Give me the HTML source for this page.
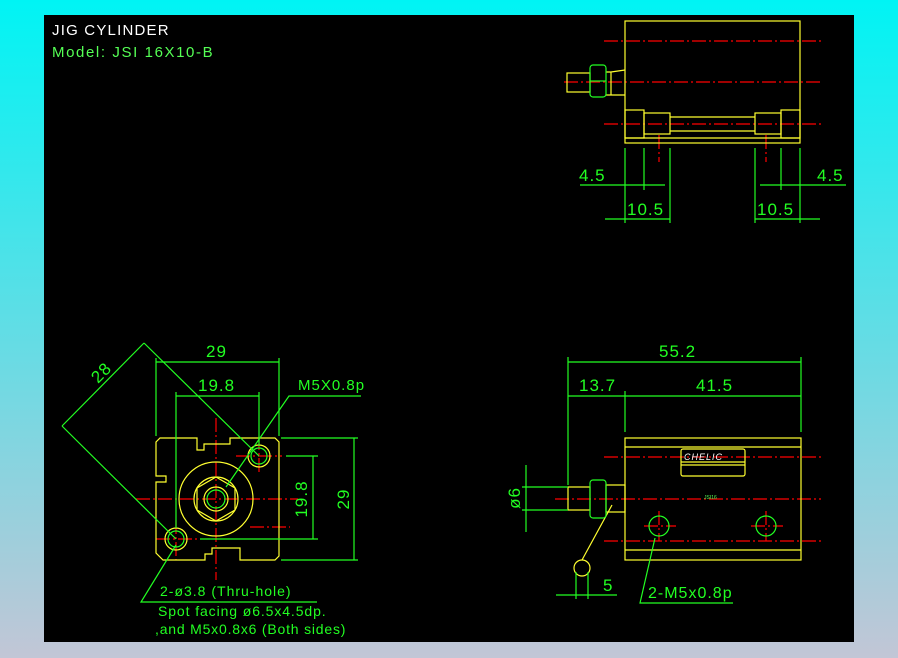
<!DOCTYPE html>
<html><head><meta charset="utf-8"><style>
html,body{margin:0;padding:0;width:898px;height:658px;overflow:hidden;background:linear-gradient(#00f4f4,#c2c6d6);}
svg{position:absolute;left:0;top:0}
text{font-family:"Liberation Sans",sans-serif;}
</style></head><body>
<svg width="898" height="658" viewBox="0 0 898 658">
<rect x="44" y="15" width="810" height="627" fill="#000"/>
<text x="52" y="35" fill="#fff" font-size="15" letter-spacing="1.2">JIG CYLINDER</text>
<text x="52" y="57" fill="#5f5" font-size="15" letter-spacing="1.6">Model:  JSI 16X10-B</text>

<g fill="none" stroke-width="1.2">
<g stroke="#f00" stroke-dasharray="14,3,2,3">
<line x1="604" y1="41" x2="821" y2="41"/><line x1="564" y1="82" x2="821" y2="82"/><line x1="604" y1="124" x2="821" y2="124"/>
<line x1="659" y1="135" x2="659" y2="162"/><line x1="766" y1="135" x2="766" y2="162"/>
<line x1="604" y1="457" x2="821" y2="457"/><line x1="555" y1="499" x2="821" y2="499"/><line x1="604" y1="541" x2="821" y2="541"/>
<line x1="136" y1="499" x2="298" y2="499"/><line x1="216" y1="418" x2="216" y2="580"/>
<line x1="236" y1="456" x2="282" y2="456"/><line x1="259" y1="436" x2="259" y2="472"/>
<line x1="156" y1="539" x2="198" y2="539"/><line x1="176" y1="520" x2="176" y2="560"/>
<line x1="644" y1="526" x2="676" y2="526"/><line x1="659" y1="511" x2="659" y2="541"/>
<line x1="751" y1="526" x2="783" y2="526"/><line x1="766" y1="511" x2="766" y2="541"/>
<line x1="250" y1="527" x2="290" y2="527"/>
</g>
<g stroke="#ffff30">
<rect x="625" y="21" width="175" height="122"/><line x1="625" y1="138" x2="800" y2="138"/>
<rect x="625" y="110" width="19" height="28"/><rect x="644" y="113" width="26" height="21"/>
<line x1="670" y1="117" x2="755" y2="117"/><line x1="670" y1="131" x2="755" y2="131"/>
<rect x="755" y="113" width="26" height="21"/><rect x="781" y="110" width="19" height="28"/>
<path d="M625 70 L611 72 L606 72 M625 95 L611 95 L606 95 M611 72 L611 95"/>
<rect x="567" y="73" width="23" height="19"/>
<path d="M160 438 L197 438 L197 450 L204 450 L204 444 L230 444 L230 438 L275 438 L279 442 L279 556 L275 560 L240 560 L240 548 L212 548 L212 554 L205 554 L205 560 L163 560 L156 553 L156 482 L166 482 L166 476 L156 476 L156 442 Z"/>
<circle cx="216" cy="499" r="37"/><circle cx="216" cy="499" r="22"/>
<polygon points="216,477 235,488 235,510 216,521 197,510 197,488"/>
<circle cx="216" cy="499" r="12"/>
<circle cx="259" cy="456" r="11"/><circle cx="176" cy="539" r="11"/>
<rect x="625" y="438" width="176" height="122"/><line x1="625" y1="447" x2="801" y2="447"/><line x1="625" y1="550" x2="801" y2="550"/>
<rect x="681" y="449" width="64" height="27" rx="2"/><line x1="681" y1="462" x2="745" y2="462"/><line x1="681" y1="465" x2="745" y2="465"/>
<rect x="568" y="487" width="22" height="23"/><rect x="606" y="485" width="19" height="27"/>
<path d="M612 505 L582 560"/><circle cx="582" cy="568" r="8"/>
</g>
<g stroke="#2f2">
<rect x="590" y="65" width="16" height="32" rx="3"/><line x1="590" y1="81" x2="606" y2="81"/>
<circle cx="259" cy="456" r="8"/><circle cx="176" cy="539" r="8"/><circle cx="216" cy="499" r="9"/>
<circle cx="659" cy="526" r="10"/><circle cx="766" cy="526" r="10"/>
<rect x="590" y="480" width="16" height="38" rx="3"/>
<line x1="625" y1="148" x2="625" y2="223"/><line x1="644" y1="148" x2="644" y2="190"/><line x1="670" y1="148" x2="670" y2="223"/>
<line x1="755" y1="148" x2="755" y2="223"/><line x1="781" y1="148" x2="781" y2="190"/><line x1="800" y1="148" x2="800" y2="223"/>
<line x1="580" y1="185" x2="665" y2="185"/><line x1="760" y1="185" x2="846" y2="185"/>
<line x1="605" y1="219" x2="670" y2="219"/><line x1="755" y1="219" x2="820" y2="219"/>
<line x1="156" y1="358" x2="156" y2="436"/><line x1="279" y1="358" x2="279" y2="436"/><line x1="156" y1="362" x2="279" y2="362"/>
<line x1="176" y1="392" x2="176" y2="528"/><line x1="259" y1="392" x2="259" y2="446"/><line x1="176" y1="396" x2="259" y2="396"/>
<line x1="144" y1="343" x2="62" y2="426"/><line x1="144" y1="343" x2="259" y2="456"/><line x1="62" y1="426" x2="176" y2="539"/>
<line x1="281" y1="438" x2="358" y2="438"/><line x1="281" y1="560" x2="358" y2="560"/><line x1="354" y1="438" x2="354" y2="560"/>
<line x1="286" y1="456" x2="318" y2="456"/><line x1="200" y1="539" x2="318" y2="539"/><line x1="313" y1="456" x2="313" y2="539"/>
<path d="M361 396 L289 396 L226 487"/>
<path d="M176 545 L141 602 L317 602"/>
<line x1="568" y1="357" x2="568" y2="485"/><line x1="625" y1="391" x2="625" y2="432"/><line x1="801" y1="357" x2="801" y2="432"/>
<line x1="568" y1="362" x2="801" y2="362"/><line x1="568" y1="396" x2="801" y2="396"/>
<line x1="522" y1="487" x2="568" y2="487"/><line x1="522" y1="510" x2="568" y2="510"/><line x1="526" y1="465" x2="526" y2="532"/>
<line x1="576" y1="572" x2="576" y2="599"/><line x1="588" y1="572" x2="588" y2="599"/><line x1="556" y1="595" x2="617" y2="595"/>
<path d="M655 538 L640 603 L733 603"/>
</g>
</g>
<g fill="#2f2" font-size="17" letter-spacing="1">
<text x="579" y="181">4.5</text><text x="817" y="181">4.5</text>
<text x="627" y="215">10.5</text><text x="757" y="215">10.5</text>
<text x="206" y="357">29</text><text x="198" y="391">19.8</text>
<text x="298" y="390" font-size="15">M5X0.8p</text>
<text transform="translate(98,384) rotate(-45)">28</text>
<text transform="translate(307,499) rotate(-90)" text-anchor="middle">19.8</text>
<text transform="translate(349,499) rotate(-90)" text-anchor="middle">29</text>
<text x="160" y="596" font-size="14" letter-spacing="1">2-ø3.8 (Thru-hole)</text>
<text x="158" y="616" font-size="14" letter-spacing="0.9">Spot facing ø6.5x4.5dp.</text>
<text x="155" y="634" font-size="14" letter-spacing="0.8">,and M5x0.8x6 (Both sides)</text>
<text x="659" y="357">55.2</text><text x="579" y="391">13.7</text><text x="696" y="391">41.5</text>
<text transform="translate(520,498) rotate(-90)" text-anchor="middle">ø6</text>
<text x="603" y="591">5</text>
<text x="648" y="598" font-size="16">2-M5x0.8p</text>
</g>
<text x="684" y="460" fill="#fff" font-size="9" font-style="italic" letter-spacing="1">CHELIC</text>
<text x="704" y="499" fill="#5f5" font-size="5">JSI16</text>
</svg>
</body></html>
